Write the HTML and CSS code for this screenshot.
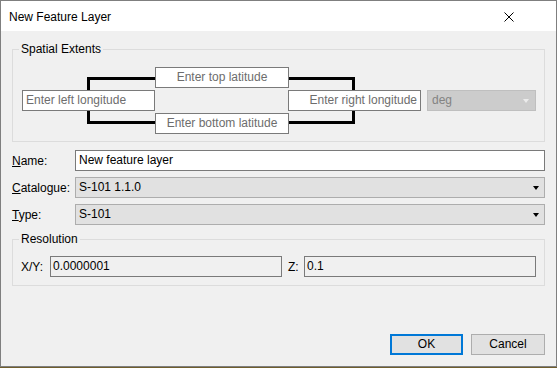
FILE: index.html
```html
<!DOCTYPE html>
<html>
<head>
<meta charset="utf-8">
<title>New Feature Layer</title>
<link rel="stylesheet" href="styles.css">
</head>
<body>
<div class="window">
  <div class="titlebar">
    <span class="title">New Feature Layer</span>
    <svg class="close" width="10" height="10" viewBox="0 0 10 10"><path d="M0.5 0.5 L9.5 9.5 M9.5 0.5 L0.5 9.5" stroke="#000" stroke-width="1" fill="none"/></svg>
  </div>
  <div class="content">
    <fieldset class="group">
      <legend>Spatial Extents</legend>
      <div class="group-body extents-body">
        <div class="extents">
          <div class="bracket bracket-left"></div>
          <div class="bracket bracket-right"></div>
          <div class="box box-left">Enter left longitude</div>
          <div class="center-col">
            <div class="box box-center">Enter top latitude</div>
            <div class="box box-center">Enter bottom latitude</div>
          </div>
          <div class="box box-right">Enter right longitude</div>
          <div class="combo combo-disabled">deg<span class="arrow arrow-light"></span></div>
        </div>
      </div>
    </fieldset>

    <div class="form">
      <label class="label"><u>N</u>ame:</label>
      <div class="textbox">New feature layer</div>
      <label class="label"><u>C</u>atalogue:</label>
      <div class="combo">S-101 1.1.0<span class="arrow"></span></div>
      <label class="label"><u>T</u>ype:</label>
      <div class="combo">S-101<span class="arrow"></span></div>
    </div>

    <fieldset class="group resolution">
      <legend>Resolution</legend>
      <div class="group-body res-body">
        <span class="res-label xy">X/Y:</span>
        <div class="textbox readonly">0.0000001</div>
        <span class="res-label z">Z:</span>
        <div class="textbox readonly">0.1</div>
      </div>
    </fieldset>

    <div class="footer">
      <button class="btn btn-default">OK</button>
      <button class="btn">Cancel</button>
    </div>
  </div>
</div>
</body>
</html>
```
FILE: styles.css
```css
html, body {
  margin: 0;
  padding: 0;
}
body {
  background: #6f5d2c;
  font-family: "Liberation Sans", Arial, sans-serif;
  font-size: 12px;
  color: #000;
  width: 557px;
  height: 368px;
  overflow: hidden;
}
.window {
  box-sizing: border-box;
  width: 557px;
  height: 367px;
  border: 1px solid #7f7f7f;
  background: #f0f0f0;
  display: flex;
  flex-direction: column;
}
.titlebar {
  height: 30px;
  background: #fff;
  display: flex;
  align-items: center;
  padding: 0 0 0 8px;
  flex: none;
}
.title {
  flex: 1;
  line-height: 16px;
  padding-top: 1px;
}
.close {
  margin-right: 42px;
  margin-top: 1px;
  display: block;
}
.content {
  flex: 1;
  display: flex;
  flex-direction: column;
  padding: 10px 11px 11px 11px;
}
.group {
  margin: 0;
  padding: 0;
  border: 1px solid #dcdcdc;
  min-width: 0;
}
.group legend {
  margin-left: 6px;
  padding: 0 2px;
  line-height: 16px;
  height: 16px;
  color: #000;
}
.extents-body {
  padding: 10px 8px 7px 9px;
}
.extents {
  position: relative;
  display: flex;
  align-items: center;
  height: 67px;
}
.box {
  position: relative;
  z-index: 1;
  box-sizing: border-box;
  height: 21px;
  line-height: 19px;
  border: 1px solid #7a7a7a;
  background: #fff;
  color: #6d6d6d;
  white-space: nowrap;
  overflow: hidden;
}
.box-left {
  width: 133px;
  padding-left: 3px;
}
.center-col {
  display: flex;
  flex-direction: column;
  gap: 25px;
  width: 134px;
}
.box-center {
  width: 134px;
  text-align: center;
}
.box-right {
  width: 133px;
  margin-left: -1px;
  text-align: right;
  padding-right: 3px;
}
.bracket {
  position: absolute;
  top: 10px;
  height: 47px;
  box-sizing: border-box;
  border: 3px solid #000;
  z-index: 0;
}
.bracket-left {
  left: 65px;
  width: 70px;
  border-right: none;
}
.bracket-right {
  left: 264px;
  width: 69px;
  border-left: none;
}
.combo {
  position: relative;
  box-sizing: border-box;
  height: 21px;
  line-height: 19px;
  border: 1px solid #adadad;
  background: #e1e1e1;
  padding-left: 3px;
  white-space: nowrap;
}
.combo-disabled {
  width: 109px;
  margin-left: 6px;
  background: #cccccc;
  border-color: #bfbfbf;
  color: #838383;
  padding-left: 4px;
}
.arrow {
  position: absolute;
  right: 5px;
  top: 8px;
  width: 0;
  height: 0;
  border-left: 3.5px solid transparent;
  border-right: 3.5px solid transparent;
  border-top: 4px solid #000;
}
.arrow-light {
  right: 6px;
  border-top-color: #ececec;
}
.form {
  margin-top: 8px;
  display: grid;
  grid-template-columns: 63px 1fr;
  row-gap: 6px;
  align-items: center;
}
.label {
  line-height: 16px;
}
.textbox {
  box-sizing: border-box;
  height: 21px;
  line-height: 19px;
  border: 1px solid #7a7a7a;
  background: #fff;
  padding-left: 3px;
  white-space: nowrap;
}
.resolution {
  margin-top: 6px;
}
.res-body {
  display: flex;
  align-items: center;
  padding: 9px 8px 8px 8px;
}
.res-label {
  line-height: 16px;
}
.res-label.xy {
  width: 29px;
}
.res-label.z {
  width: 16px;
  margin-left: 6px;
}
.textbox.readonly {
  width: 232px;
  background: #f0f0f0;
  padding-left: 2px;
}
.footer {
  margin-top: auto;
  display: flex;
  justify-content: flex-end;
  gap: 8px;
}
.btn {
  box-sizing: border-box;
  height: 21px;
  width: 74px;
  font-family: inherit;
  font-size: 12px;
  color: #000;
  background: #e1e1e1;
  border: 1px solid #adadad;
  padding: 0;
  margin: 0;
  line-height: 17px;
}
.btn-default {
  width: 73px;
  border: 2px solid #0078d7;
}
```
